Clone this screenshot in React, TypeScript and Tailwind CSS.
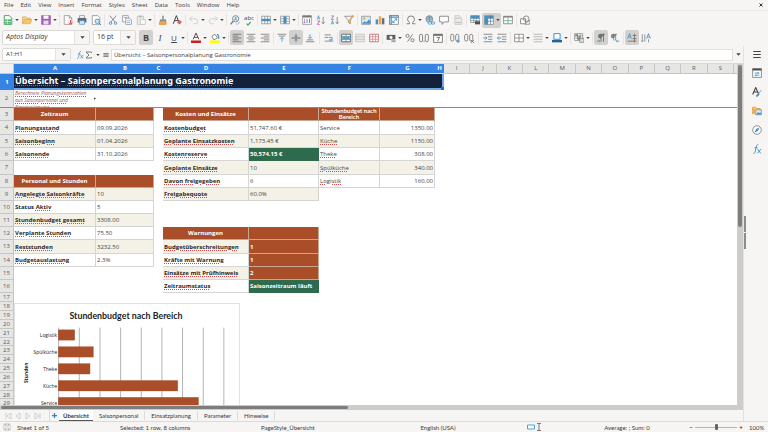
import React from "react";

/* ---------- icons ---------- */

type IconName = keyof typeof glyphs;

const G = "#777777";
const B = "#3f94cc";

const glyphs = {
  newSheet: (
    <>
      <path d="M2 1h8l4 4v10H2z" fill="#fff" stroke="#2f9e58" strokeWidth="1.4" />
      <path d="M3 7h10v7H3z" fill="#4bb772" />
      <path d="M3 10.500h10M7 7v7" stroke="#fff" />
    </>
  ),
  open: (
    <>
      <path d="M1 14V3h5l1.500 2H13v3" fill="#f7d9a0" stroke="#e0a03c" strokeWidth="1.200" />
      <path d="M1 14l3-7h12l-3 7z" fill="#f6c66e" stroke="#e0a03c" />
    </>
  ),
  save: (
    <>
      <path d="M1 1h14v14H1z" fill="#a463b8" stroke="#8e4aa3" />
      <path d="M4 1h8v5H4z" fill="#fff" />
      <path d="M4 9h8v6H4z" fill="#e9d7ee" />
    </>
  ),
  pdf: (
    <>
      <path d="M2 1h8l4 4v10H2z" fill="#fff" stroke={G} />
      <path d="M10 1v4h4" fill="none" stroke={G} />
      <path d="M12 8v6M9 12l3 3 3-3" fill="none" stroke="#d94a4a" strokeWidth="1.500" />
    </>
  ),
  print: (
    <>
      <path d="M4 1h8v4H4z" fill="#fff" stroke={G} />
      <path d="M1 5h14v7H1z" fill="#5d6570" />
      <path d="M4 9h8v6H4z" fill="#cfe6f5" stroke={B} />
    </>
  ),
  preview: (
    <>
      <path d="M2 1h9l3 3v11H2z" fill="#fff" stroke={G} />
      <circle cx="10" cy="10" r="3.500" fill="#cfe6f5" stroke={B} strokeWidth="1.400" />
      <path d="M12.500 12.500L16 16" stroke={B} strokeWidth="1.600" />
    </>
  ),
  cut: (
    <>
      <path d="M3 1l8 10M13 1L5 11" stroke={G} strokeWidth="1.300" fill="none" />
      <circle cx="4" cy="13" r="2" fill="none" stroke={B} strokeWidth="1.500" />
      <circle cx="12" cy="13" r="2" fill="none" stroke={B} strokeWidth="1.500" />
    </>
  ),
  copy: (
    <>
      <path d="M1 1h9v10H1z" fill="#fff" stroke={G} />
      <path d="M6 5h6l3 3v7H6z" fill="#fff" stroke={G} />
      <path d="M8 9h5M8 12h5M3 4h5" stroke={B} />
    </>
  ),
  paste: (
    <g opacity="0.5">
      <path d="M2 2h10v13H2z" fill="#e2e2e2" stroke={G} />
      <path d="M5 1h4v3H5z" fill={G} />
      <path d="M7 7h8v8H7z" fill="#fff" stroke={G} />
    </g>
  ),
  brush: (
    <>
      <path d="M7 1h2v6H7z" fill={G} />
      <path d="M3 7h10v3H3z" fill="#8a8a8a" />
      <path d="M3 10h10v5H2z" fill="#eda64f" stroke="#d08530" />
    </>
  ),
  clearFormat: (
    <>
      <path d="M2 14L7 1l5 13M4 9h6" fill="none" stroke="#444" strokeWidth="1.600" />
      <path d="M8 12l4-4 4 3-4 4z" fill="#e05c5c" />
    </>
  ),
  undo: <path d="M1 6h9a4 4 0 010 8H7M5 2L1 6l4 4" fill="none" stroke="#cfcfcd" strokeWidth="1.500" />,
  redo: <path d="M15 6H6a4 4 0 000 8h3M11 2l4 4-4 4" fill="none" stroke="#cfcfcd" strokeWidth="1.500" />,
  find: (
    <>
      <circle cx="9" cy="6" r="5" fill="#e4f1fa" stroke={G} strokeWidth="1.300" />
      <path d="M5 10l-4 5" stroke={G} strokeWidth="2" />
      <path d="M7 9l2-6 2 6M8 7h2" fill="none" stroke={B} />
      <path d="M10 14l2 1 4-4" fill="none" stroke={B} />
    </>
  ),
  rows: (
    <>
      <path d="M1 2h14v12H1z" fill="#fff" stroke={G} />
      <path d="M1 6h14v4H1z" fill={B} />
      <path d="M6 2v12M10.500 2v12" stroke={G} />
    </>
  ),
  cols: (
    <>
      <path d="M1 2h14v12H1z" fill="#fff" stroke={G} />
      <path d="M5.500 2h5v12h-5z" fill={B} />
      <path d="M1 6h14M1 10h14" stroke={G} />
    </>
  ),
  sort: (
    <>
      <path d="M1 1h14v14H1z" fill="#fff" stroke={G} />
      <path d="M1 1h14v3H1z" fill={G} />
      <path d="M4 6v7M2.500 11L4 13l1.500-2" fill="none" stroke="#b0559e" />
      <path d="M8 13V6M12 6v7" stroke={B} strokeWidth="1.500" />
    </>
  ),
  sortAsc: (
    <>
      <path d="M2 7l2-6 2 6M3 5h2" fill="none" stroke={B} strokeWidth="1.200" />
      <path d="M2 9.500h4L2 15h4" fill="none" stroke="#b0559e" strokeWidth="1.200" />
      <path d="M11.500 3v11M9 11l2.500 3 2.500-3" fill="none" stroke={G} strokeWidth="1.200" />
    </>
  ),
  sortDesc: (
    <>
      <path d="M2 1.500h4L2 7h4" fill="none" stroke="#b0559e" strokeWidth="1.200" />
      <path d="M2 15l2-6 2 6M3 13h2" fill="none" stroke={B} strokeWidth="1.200" />
      <path d="M11.500 3v11M9 11l2.500 3 2.500-3" fill="none" stroke={G} strokeWidth="1.200" />
    </>
  ),
  filter: (
    <>
      <path d="M1 2h14l-5 6v6l-3-2V8z" fill="#fff" stroke={G} strokeWidth="1.200" />
      <path d="M13 1h2l-5 7v5l-1-1V7z" fill="#eda64f" stroke="#eda64f" />
    </>
  ),
  image: (
    <>
      <path d="M1 2h14v13H1z" fill="#d8ecf8" stroke={G} />
      <circle cx="5" cy="5.500" r="2" fill="#eda64f" />
      <path d="M1.500 14l4-4 3 2 4-5 2.500 3v4z" fill={B} />
    </>
  ),
  chart: (
    <>
      <path d="M1 7h4v8H1z" fill={B} />
      <path d="M6 2h4v13H6z" fill="#eda64f" />
      <path d="M11 5h4v10h-4z" fill="#66707c" />
    </>
  ),
  pivot: (
    <>
      <path d="M1 1h14v14H1z" fill="#fff" stroke={G} strokeWidth="1.200" />
      <path d="M1 1h14v3H1zM1 1h3v14H1z" fill="#a5cde8" stroke={G} />
      <path d="M6 12l6-6M9 6h3v3M9 12H6V9" fill="none" stroke={B} strokeWidth="1.400" />
    </>
  ),
  omega: (
    <path
      d="M1 14h4.500v-2A6 6 0 012.500 7a5.500 5.500 0 0111 0 6 6 0 01-3 5v2H15"
      fill="none"
      stroke={G}
      strokeWidth="1.500"
    />
  ),
  link: (
    <>
      <circle cx="7" cy="6.500" r="5.500" fill="#a5cde8" stroke={G} />
      <path d="M1.500 6.500h11M7 1v11M3 3.500h8" stroke={G} fill="none" />
      <rect x="5" y="11" width="6" height="3.500" rx="1.700" fill="#fff" stroke={B} strokeWidth="1.300" />
      <rect x="10" y="11" width="5.500" height="3.500" rx="1.700" fill="none" stroke={B} strokeWidth="1.300" />
    </>
  ),
  comment: <path d="M1 2h14v9H8l-3 4v-4H1z" fill="#fff" stroke={G} strokeWidth="1.300" />,
  headerFooter: (
    <g opacity="0.45">
      <path d="M3 1h7l4 4v10H3z" fill="#ddd" stroke={G} />
      <path d="M4 5h8M4 12h9" stroke={G} strokeWidth="1.500" />
    </g>
  ),
  printArea: (
    <>
      <path d="M1 1h14v11H1z" fill="#fff" stroke={G} />
      <path d="M1 1h14v5H1z" fill={B} />
      <path d="M6 1v11M10 1v11M1 9h14" stroke={G} />
      <path d="M8 10h8v5H8z" fill="#4b525c" />
    </>
  ),
  freeze: (
    <>
      <path d="M1 1h14v14H1z" fill="#fff" stroke={G} />
      <path d="M1 1h14v4H1zM1 1h5v14H1z" fill={B} />
      <path d="M6 5v10M6 5h9M10.500 1v14M1 10h14" stroke="#4f6f88" />
    </>
  ),
  splitWin: (
    <>
      <path d="M1 2h14v12H1z" fill="#fff" stroke={G} strokeWidth="1.200" />
      <path d="M1 2h14v2H1z" fill={G} />
      <path d="M8 4v10M1 9h14" stroke="#5aa47c" strokeWidth="1.200" />
    </>
  ),
  shapes: (
    <>
      <path d="M1 6h8v8H1z" fill="#fff" stroke={G} strokeWidth="1.300" />
      <circle cx="10" cy="6" r="4.500" fill="none" stroke={G} strokeWidth="1.300" />
      <path d="M8 15l7-7v7z" fill="none" stroke={G} />
    </>
  ),
  fontColor: (
    <>
      <path d="M3.500 10L8 0l4.500 10M5 7h6" fill="none" stroke="#555" strokeWidth="1.600" />
      <path d="M0 12h16v4H0z" fill="#c9211e" />
    </>
  ),
  highlight: (
    <>
      <path d="M3 5l5-3 4 6-6 3z" fill="#fff" stroke={G} strokeWidth="1.300" />
      <path d="M11 2c3 0 3 3 3 7" fill="none" stroke={B} strokeWidth="2" />
      <path d="M0 12h16v4H0z" fill="#ffff00" />
    </>
  ),
  alignL: <path d="M1 2h14M1 5h9M1 8h14M1 11h9M1 14h14" stroke="#666" strokeWidth="1.300" />,
  alignC: <path d="M1 2h14M4 5h8M1 8h14M4 11h8M1 14h14" stroke={G} strokeWidth="1.300" />,
  alignR: <path d="M1 2h14M6 5h9M1 8h14M6 11h9M1 14h14" stroke={G} strokeWidth="1.300" />,
  vTop: (
    <>
      <path d="M1 2h14M3 5h10" stroke={G} strokeWidth="1.300" />
      <path d="M8 14V7M5 10l3-3 3 3" fill="none" stroke={B} strokeWidth="1.300" />
    </>
  ),
  vMid: (
    <>
      <path d="M1 8h14" stroke="#666" strokeWidth="1.600" />
      <path
        d="M8 1v5M5.500 4L8 6.500 10.500 4M8 15v-5M5.500 12L8 9.500l2.500 2.500"
        fill="none"
        stroke="#4a7fa6"
        strokeWidth="1.300"
      />
    </>
  ),
  vBot: (
    <>
      <path d="M1 14h14M3 11h10" stroke={G} strokeWidth="1.300" />
      <path d="M8 2v7M5 6l3 3 3-3" fill="none" stroke={B} strokeWidth="1.300" />
    </>
  ),
  wrap: (
    <>
      <path d="M1 3h10M1 7h6M1 13h14" stroke={G} strokeWidth="1.300" />
      <path d="M8 7h5v4h-4M11 9l-2 2 2 2" fill="none" stroke={B} strokeWidth="1.300" />
    </>
  ),
  merge: (
    <>
      <path d="M1 2h14v12H1z" fill="#fff" stroke="#555" strokeWidth="1.300" />
      <path d="M1 5.500h14v5H1z" fill="#7dbce3" stroke="#4a7fa6" />
      <path d="M8 2v3M8 11v3M4 8h8M6 6L4 8l2 2M10 6l2 2-2 2" fill="none" stroke="#3b6a8f" />
    </>
  ),
  mergeOff: (
    <g opacity="0.5">
      <path d="M1 2h14v12H1z" fill="#ddd" stroke={G} />
      <path d="M1 6h14M1 10h14" stroke={G} />
    </g>
  ),
  unmerge: (
    <>
      <path d="M1 2h14v12H1z" fill="#fff" stroke="#b55" strokeWidth="1.200" />
      <path d="M1 6h14M1 10h14M6 2v12M10.500 2v12" stroke="#d06a6a" />
    </>
  ),
  currency: (
    <>
      <path d="M1 3h14v8H1z" fill="#5c6066" />
      <circle cx="8" cy="7" r="2.500" fill="#f4f4f4" />
      <path d="M8 11h8v4H8z" fill="#9a9a9a" stroke="#fff" />
    </>
  ),
  percent: (
    <>
      <circle cx="4" cy="4.500" r="2.500" fill="none" stroke={G} strokeWidth="1.400" />
      <circle cx="12" cy="11.500" r="2.500" fill="none" stroke={G} strokeWidth="1.400" />
      <path d="M12 2L4 14" stroke={G} strokeWidth="1.400" />
    </>
  ),
  number: (
    <>
      <rect x="0.700" y="2" width="5" height="12" rx="2.500" fill="none" stroke={G} strokeWidth="1.400" />
      <rect x="10" y="2" width="5" height="12" rx="2.500" fill="none" stroke={G} strokeWidth="1.400" />
      <path d="M7 13h2" stroke={G} strokeWidth="1.500" />
    </>
  ),
  date: (
    <>
      <path d="M1 2h14v13H1z" fill="#fff" stroke="#666" strokeWidth="1.300" />
      <path d="M1 2h14v2.500H1z" fill="#666" />
      <path d="M5.500 7h5l-3 6" fill="none" stroke="#555" strokeWidth="1.300" />
    </>
  ),
  decAdd: (
    <>
      <rect x="1" y="2" width="5" height="11" rx="2.500" fill="none" stroke={G} strokeWidth="1.300" />
      <rect x="9" y="2" width="5" height="11" rx="2.500" fill="none" stroke={G} strokeWidth="1.300" />
      <path d="M13 10v6M10 13h6" stroke={B} strokeWidth="1.600" />
    </>
  ),
  decDel: (
    <>
      <rect x="1" y="2" width="5" height="11" rx="2.500" fill="none" stroke={G} strokeWidth="1.300" />
      <rect x="9" y="2" width="5" height="11" rx="2.500" fill="none" stroke={G} strokeWidth="1.300" />
      <path d="M11 11l5 5M16 11l-5 5" stroke="#d94a4a" strokeWidth="1.400" />
    </>
  ),
  indent: (
    <>
      <path d="M1 2h14M8 6h7M8 10h7M1 14h14" stroke={G} strokeWidth="1.300" />
      <path d="M0 8h6M4 5.500L6.500 8 4 10.500" fill="none" stroke={B} strokeWidth="1.400" />
    </>
  ),
  outdent: (
    <>
      <path d="M1 2h14M8 6h7M8 10h7M1 14h14" stroke={G} strokeWidth="1.300" />
      <path d="M1 8h6M3 5.500L0.500 8 3 10.500" fill="none" stroke={B} strokeWidth="1.400" />
    </>
  ),
  borders: <path d="M1 2h14v12H1zM8 2v12M1 8h14" fill="#fff" stroke={G} strokeWidth="1.200" />,
  borderStyle: <path d="M1 2h14M1 6h14M1 10h14M1 14h14" stroke="#b5b5b5" strokeWidth="1.500" />,
  borderColor: (
    <>
      <path d="M3 1h10v9H3z" fill="#fff" stroke={B} strokeWidth="1.600" />
      <path d="M0 11h16v4H0z" fill="#2a6099" />
    </>
  ),
  conditional: (
    <>
      <path d="M1 1h13v11H1z" fill="#fff" stroke={G} />
      <path d="M2 2h4v3H2zM6 8h4v3H6z" fill="#5fae7b" />
      <path d="M6 5h4v3H6z" fill="#e07a6a" />
      <path d="M1 4.500h13M1 8h13M5.500 1v11M10 1v11" stroke={G} />
      <path d="M9 9h7v6H9z" fill="#ddd" stroke={G} />
    </>
  ),
  ltr: (
    <>
      <path d="M8 14V2M12 14V2M14 2H7a3 3 0 000 6h1" fill="#777" stroke="#666" strokeWidth="1.300" />
      <path d="M1 13h5M4 11l2 2-2 2" fill="none" stroke={B} strokeWidth="1.200" />
    </>
  ),
  rtl: (
    <>
      <path d="M6 12V2M9 12V2M11 2H5a3 3 0 000 6h1" fill="#888" stroke={G} strokeWidth="1.200" />
      <path d="M15 13h-5M12 11l-2 2 2 2" fill="none" stroke={B} strokeWidth="1.200" />
    </>
  ),
  textH: (
    <>
      <path d="M1 9l3-8 3 8M2.500 6.500h3" fill="none" stroke={B} strokeWidth="1.400" />
      <path d="M9 4h6M9 9h6M1 13h14M12 1v14" stroke="#666" strokeWidth="1.200" />
    </>
  ),
  textV: (
    <>
      <path d="M2 2v12M6 2v12M0.500 12L2 14l1.500-2M12 10v5" fill="none" stroke={G} strokeWidth="1.200" />
      <path d="M9 9l3-8 3 8M10.500 6.500h3" fill="none" stroke={B} strokeWidth="1.400" />
    </>
  ),
  properties: (
    <>
      <path d="M1 1h14v14H1z" fill="#fff" stroke={G} strokeWidth="1.300" />
      <path d="M1 1h14v3H1z" fill="#4a4a4a" />
      <path d="M4 8h8M4 11.500h8M9.500 6.500v3M6.500 10v3" stroke={B} strokeWidth="1.300" />
    </>
  ),
  styles: (
    <>
      <path d="M1 12L6 1l5 11M3 8h6" fill="none" stroke="#444" strokeWidth="1.800" />
      <path d="M15 5l-5 6M7 15c0-3 2-4 4-4 0 3-2 4-4 4z" fill={B} stroke={B} strokeWidth="1.300" />
    </>
  ),
  gallery: (
    <>
      <path d="M1 13V2h5l1 2h6v3" fill="#f7d9a0" stroke="#e0a03c" strokeWidth="1.500" />
      <path d="M1 4h4v9H1z" fill="#f0b04e" />
      <path d="M6 6h9v8H6z" fill="#d8ecf8" stroke={G} />
      <path d="M6.500 13.500l3-4 2 2 1.500-2 2 4z" fill={B} />
    </>
  ),
  navigator: (
    <>
      <circle cx="8" cy="8" r="6.800" fill="#fff" stroke={G} strokeWidth="1.300" />
      <path d="M12 4L9.500 9.500 4 12l2.500-5.500z" fill={B} />
    </>
  ),
  functions: (
    <>
      <path d="M2 15c3 0 3-2 4-7s1-7 4-7M4 6h5" fill="none" stroke={B} strokeWidth="1.500" />
      <path d="M9 8l5 7M14.500 8L8.500 15" fill="none" stroke={B} strokeWidth="1.500" />
    </>
  ),
  sigma: <path d="M13 4V2H2l6 6-6 6h11v-2" fill="none" stroke="#555" strokeWidth="1.500" />,
  equals: <path d="M1 5h14M1 11h14" stroke="#444" strokeWidth="2.600" />,
  menu: <path d="M2 4h12M2 8.800h12M2 13.600h12" stroke="#444" strokeWidth="1.800" />,
  saved: <path d="M2 2h12v12H2zM5 2v4h6V2M5 14v-4h6v4" fill="#fff" stroke="#a5a5a5" strokeWidth="1.300" />,
  caret: <path d="M1 4h14l-7 8z" fill="#444" />,
  check: <path d="M2 8l4 5 9-10" fill="none" stroke="#35a864" strokeWidth="3.500" />,
};

function Icon({ name, className = "size-[10px]" }: { name: IconName; className?: string }) {
  return (
    <svg viewBox="0 0 16 16" className={className} aria-hidden="true">
      {glyphs[name]}
    </svg>
  );
}

/* ---------- toolbars ---------- */

type Tool = {
  icon?: IconName;
  text?: React.ReactNode;
  label: string;
  menu?: boolean;
  active?: boolean;
};
type Entry = Tool | "|" | "||";

const standardTools: Entry[] = [
  { icon: "newSheet", label: "New", menu: true },
  { icon: "open", label: "Open", menu: true },
  { icon: "save", label: "Save", menu: true },
  "|",
  { icon: "pdf", label: "Export as PDF" },
  { icon: "print", label: "Print" },
  { icon: "preview", label: "Print preview" },
  "|",
  { icon: "cut", label: "Cut" },
  { icon: "copy", label: "Copy" },
  { icon: "paste", label: "Paste", menu: true },
  "|",
  { icon: "brush", label: "Clone formatting" },
  { icon: "clearFormat", label: "Clear formatting" },
  "|",
  { icon: "undo", label: "Undo", menu: true },
  { icon: "redo", label: "Redo", menu: true },
  "|",
  { icon: "find", label: "Find and replace" },
  {
    text: (
      <span className="flex flex-col items-center text-[6px] leading-[6px]">
        abc
        <Icon name="check" className="size-[5px]" />
      </span>
    ),
    label: "Spelling",
  },
  "|",
  { icon: "rows", label: "Row", menu: true },
  { icon: "cols", label: "Column", menu: true },
  "|",
  { icon: "sort", label: "Sort" },
  { icon: "sortAsc", label: "Sort ascending" },
  { icon: "sortDesc", label: "Sort descending" },
  { icon: "filter", label: "AutoFilter" },
  "|",
  { icon: "image", label: "Insert image" },
  { icon: "chart", label: "Insert chart" },
  { icon: "pivot", label: "Insert pivot table" },
  "|",
  { icon: "omega", label: "Special character", menu: true },
  { icon: "link", label: "Hyperlink" },
  { icon: "comment", label: "Comment" },
  { icon: "headerFooter", label: "Headers and footers" },
  "|",
  { icon: "printArea", label: "Print area" },
  { icon: "freeze", label: "Freeze rows and columns", menu: true, active: true },
  { icon: "splitWin", label: "Split window" },
  "|",
  { icon: "shapes", label: "Draw functions" },
];

const formatTools: Entry[] = [
  { text: <b className="text-[9px] leading-[10px]">B</b>, label: "Bold", active: true },
  { text: <i className="font-['Liberation_Serif',serif] text-[9px] leading-[10px]">I</i>, label: "Italic" },
  { text: <span className="text-[8px] leading-[10px] underline">U</span>, label: "Underline", menu: true },
  "|",
  { icon: "fontColor", label: "Font color", menu: true },
  { icon: "highlight", label: "Background color", menu: true },
  "|",
  { icon: "alignL", label: "Align left", active: true },
  { icon: "alignC", label: "Align center" },
  { icon: "alignR", label: "Align right" },
  "|",
  { icon: "vTop", label: "Align top" },
  { icon: "vMid", label: "Center vertically", active: true },
  { icon: "vBot", label: "Align bottom" },
  "||",
  { icon: "wrap", label: "Wrap text" },
  "|",
  { icon: "merge", label: "Merge and center", active: true },
  { icon: "mergeOff", label: "Merge cells" },
  { icon: "unmerge", label: "Unmerge cells" },
  "|",
  { icon: "currency", label: "Currency", menu: true },
  { icon: "percent", label: "Percent" },
  { icon: "number", label: "Number" },
  { icon: "date", label: "Date" },
  "|",
  { icon: "decAdd", label: "Add decimal place" },
  { icon: "decDel", label: "Delete decimal place" },
  "||",
  { icon: "indent", label: "Increase indent" },
  { icon: "outdent", label: "Decrease indent" },
  "|",
  { icon: "borders", label: "Borders", menu: true },
  { icon: "borderStyle", label: "Border style", menu: true },
  { icon: "borderColor", label: "Border color", menu: true },
  "|",
  { icon: "conditional", label: "Conditional formatting", menu: true },
  "|",
  { icon: "ltr", label: "Left to right", active: true },
  { icon: "rtl", label: "Right to left" },
  "|",
  { icon: "textH", label: "Text direction horizontal", active: true },
  { icon: "textV", label: "Text direction vertical" },
];

function Tools({ entries }: { entries: Entry[] }) {
  return (
    <>
      {entries.map((e, i) =>
        typeof e === "string" ? (
          <span key={i} className={`flex h-[12px] shrink-0 justify-center ${e === "|" ? "w-[3px]" : "w-[5px]"}`}>
            <span className="w-px bg-[#e6e5e3]" />
          </span>
        ) : (
          <button
            key={i}
            type="button"
            aria-label={e.label}
            className={`flex h-[15px] shrink-0 items-center rounded-[2px] ${e.menu ? "w-[19px]" : "w-[14px]"} ${
              e.active ? "bg-[#d3d1ce]" : ""
            }`}
          >
            <span className="flex w-[14px] items-center justify-center text-[#444]">
              {e.icon ? <Icon name={e.icon} /> : e.text}
            </span>
            {e.menu && <Icon name="caret" className="size-[4px]" />}
          </button>
        )
      )}
    </>
  );
}

function Combo({
  label,
  value,
  box,
  text = "",
}: {
  label: string;
  value: string;
  box: string;
  text?: string;
}) {
  return (
    <div className={`flex shrink-0 overflow-hidden rounded-[2px] border border-[#dcdad7] bg-white ${box}`}>
      <input aria-label={label} defaultValue={value} className={`min-w-0 flex-1 pl-[3px] outline-none ${text}`} />
      <button
        type="button"
        aria-label={`${label} list`}
        className="flex w-[15px] items-center justify-center border-l border-[#e4e2df] bg-[#f6f5f4]"
      >
        <Icon name="caret" className="size-[5px]" />
      </button>
    </div>
  );
}

/* ---------- sheet ---------- */

type Cell = { v?: React.ReactNode; k: string; span?: number };

const kinds: Record<string, string> = {
  head: "bg-[#a94e28] text-white font-bold text-center border-[#c9a893]",
  key: "bg-white font-bold text-[#2a2a2a] border-[#d5d5d5]",
  keyAlt: "bg-[#f4f1e6] font-bold text-[#2a2a2a] border-[#d5d5d5]",
  val: "bg-white text-[#444] border-[#d5d5d5]",
  valAlt: "bg-[#f4f1e6] text-[#444] border-[#d5d5d5]",
  num: "bg-white text-[#444] text-right border-[#d5d5d5]",
  numAlt: "bg-[#f4f1e6] text-[#444] text-right border-[#d5d5d5]",
  bad: "bg-[#a94e28] text-white font-bold border-[#c9a893]",
  good: "bg-[#2e6b4e] text-white font-bold border-[#2e6b4e]",
  none: "border-transparent",
};

const heights: Record<number, string> = {
  8: "h-[8px] leading-[8px]",
  9: "h-[9px] leading-[9px]",
  13: "h-[13px] leading-[12px]",
  14: "h-[14px] leading-[13px]",
};

/* marks a word the spell checker does not know */
const S = ({ children }: { children: React.ReactNode }) => (
  <span className="underline decoration-[#d8484a] decoration-dotted decoration-1 underline-offset-1">{children}</span>
);

const gap = (span = 1): Cell => ({ k: "none", span });
const pair = (a: React.ReactNode, b: string, alt: boolean, kind?: string): Cell[] => [
  { v: a, k: alt ? "keyAlt" : "key" },
  { v: b, k: kind ?? (alt ? "valAlt" : "val") },
];
const area = (a: React.ReactNode, b: string, alt: boolean): Cell[] => [
  { v: a, k: alt ? "valAlt" : "val" },
  { v: b, k: alt ? "numAlt" : "num" },
];
const heading = (v: string): Cell[] => [
  { v, k: "head" },
  { v: "", k: "head" },
];

const rows: { n: number; h: number; cells: Cell[] }[] = [
  {
    n: 3,
    h: 13,
    cells: [
      ...heading("Zeitraum"),
      gap(),
      ...heading("Kosten und Einsätze"),
      {
        v: (
          <span className="block text-center font-['Lato',sans-serif] leading-[6px]">
            Stundenbudget nach
            <br />
            Bereich
          </span>
        ),
        k: "head",
      },
      { v: "", k: "head" },
    ],
  },
  {
    n: 4,
    h: 14,
    cells: [
      ...pair(<S>Planungsstand</S>, "09.09.2026", false),
      gap(),
      ...pair(<S>Kostenbudget</S>, "51,747.60 €", false),
      ...area("Service", "1350.00", false),
    ],
  },
  {
    n: 5,
    h: 13,
    cells: [
      ...pair(<S>Saisonbeginn</S>, "01.04.2026", true),
      gap(),
      ...pair(<S>Geplante Einsatzkosten</S>, "1,173.45 €", true),
      ...area(<S>Küche</S>, "1150.00", true),
    ],
  },
  {
    n: 6,
    h: 13,
    cells: [
      ...pair(<S>Saisonende</S>, "31.10.2026", false),
      gap(),
      ...pair(<S>Kostenreserve</S>, "50,574.15 €", false, "good"),
      ...area(<S>Theke</S>, "308.00", false),
    ],
  },
  {
    n: 7,
    h: 14,
    cells: [gap(3), ...pair(<S>Geplante Einsätze</S>, "10", true), ...area(<S>Spülküche</S>, "340.00", true)],
  },
  {
    n: 8,
    h: 13,
    cells: [
      ...heading("Personal und Stunden"),
      gap(),
      ...pair(<S>Davon freigegeben</S>, "6", false),
      ...area(<S>Logistik</S>, "160.00", false),
    ],
  },
  {
    n: 9,
    h: 13,
    cells: [...pair(<S>Angelegte Saisonkräfte</S>, "10", true), gap(), ...pair(<S>Freigabequote</S>, "60.0%", true)],
  },
  {
    n: 10,
    h: 13,
    cells: pair(
      <>
        Status <S>Aktiv</S>
      </>,
      "5",
      false
    ),
  },
  { n: 11, h: 13, cells: pair(<S>Stundenbudget gesamt</S>, "3308.00", true) },
  { n: 12, h: 13, cells: [...pair(<S>Verplante Stunden</S>, "75.50", false), gap(), ...heading("Warnungen")] },
  {
    n: 13,
    h: 14,
    cells: [...pair(<S>Reststunden</S>, "3232.50", true), gap(), ...pair(<S>Budgetüberschreitungen</S>, "1", true, "bad")],
  },
  {
    n: 14,
    h: 13,
    cells: [...pair(<S>Budgetauslastung</S>, "2.3%", false), gap(), ...pair(<S>Kräfte mit Warnung</S>, "1", false, "bad")],
  },
  { n: 15, h: 13, cells: [gap(3), ...pair(<S>Einsätze mit Prüfhinweis</S>, "2", true, "bad")] },
  { n: 16, h: 13, cells: [gap(3), ...pair(<S>Zeitraumstatus</S>, "Saisonzeitraum läuft", false, "good")] },
  ...[9, 9, 9, 9, 9, 8, 9, 9, 9, 9, 9, 8, 9].map((h, i) => ({ n: 17 + i, h, cells: [] as Cell[] })),
];

const rowHead =
  "border-r border-b border-[#c6c6c5] bg-[#e6e6e5] p-0 text-center align-middle text-[6px] font-normal text-[#5a5a5a]";

const selectedCols = ["A", "B", "C", "D", "E", "F", "G", "H"];
const otherCols = ["I", "J", "K", "L", "M", "N", "O", "P", "Q", "R", "S"];

function Sheet() {
  return (
    <table className="w-full table-fixed border-separate border-spacing-0 text-[6px]">
      <colgroup>
        <col className="w-[14px]" />
        <col className="w-[82px]" />
        <col className="w-[58px]" />
        <col className="w-[9px]" />
        <col className="w-[86px]" />
        <col className="w-[70px]" />
        <col className="w-[61px]" />
        <col className="w-[55px]" />
        <col className="w-[9px]" />
        {otherCols.map((c) => (
          <col key={c} />
        ))}
        <col className="w-[3px]" />
      </colgroup>
      <thead>
        <tr className="h-[10px] text-[6px] leading-[9px]">
          <th className="border-r border-b border-[#c6c6c5] bg-[#f1f1f0] p-0" />
          {selectedCols.map((c) => (
            <th key={c} scope="col" className="border-b border-[#c9dcf5] bg-[#3584e4] p-0 font-bold text-white">
              {c}
            </th>
          ))}
          {otherCols.map((c) => (
            <th
              key={c}
              scope="col"
              className="border-r border-b border-[#c6c6c5] bg-[#e6e6e5] p-0 font-normal text-[#5a5a5a]"
            >
              {c}
            </th>
          ))}
          <th className="border-b border-[#c6c6c5] bg-[#e6e6e5] p-0" />
        </tr>
      </thead>
      <tbody>
        <tr className="h-[16px]">
          <th scope="row" className="bg-[#3584e4] p-0 text-[6px] font-bold text-white">
            1
          </th>
          <td
            colSpan={8}
            className="relative border-2 border-t-0 border-l-0 border-[#77a7e3] bg-[#14213a] p-0 align-middle font-bold text-white"
          >
            <div className="h-[14px] overflow-hidden pl-px font-['Noto_Sans',sans-serif] text-[9px] leading-[14px] whitespace-nowrap">
              <S>Übersicht</S> – <S>Saisonpersonalplanung</S> <S>Gastronomie</S>
            </div>
            <span className="absolute -right-[2px] -bottom-[2px] size-[3px] bg-[#1f6fd6]" />
          </td>
          <td colSpan={12} className="p-0" />
        </tr>
        <tr className="h-[18px]">
          <th scope="row" className={rowHead + " h-[18px] border-b-[#8a8a8a]"}>
            2
          </th>
          <td className="h-[18px] border-b border-[#8a8a8a] p-0 align-top">
            <div className="h-[17px] overflow-hidden pl-px text-[5px] leading-[7px] whitespace-nowrap text-[#9a5a5a] italic">
              <S>Berechnete Planungskennzahlen</S>
              <br />
              <S>aus Saisonpersonal und</S>
              <br />
              <S>Einsatzplanung</S>
            </div>
          </td>
          <td colSpan={19} className="border-b border-[#8a8a8a] p-0 align-middle">
            <svg viewBox="0 0 3 4" className="-ml-[2px] h-[3px] w-[2px]" aria-hidden="true">
              <path d="M0 0l3 2-3 2z" fill="#444" />
            </svg>
          </td>
        </tr>
        {rows.map((r) => (
          <tr key={r.n} className={heights[r.h]}>
            <th scope="row" className={rowHead}>
              <div className={heights[r.h] + " -my-px overflow-hidden"}>{r.n}</div>
            </th>
            {r.cells.map((c, i) => (
              <td key={i} colSpan={c.span ?? 1} className={`border-r border-b p-0 align-middle ${kinds[c.k]}`}>
                <div className="h-[12px] overflow-hidden px-px whitespace-nowrap">{c.v}</div>
              </td>
            ))}
          </tr>
        ))}
      </tbody>
    </table>
  );
}

const bars = [
  { name: "Logistik", v: 160 / 1200 },
  { name: "Spülküche", v: 340 / 1200 },
  { name: "Theke", v: 308 / 1200 },
  { name: "Küche", v: 1150 / 1200 },
  { name: "Service", v: 1350 / 1200 },
];

function Chart() {
  return (
    <svg
      viewBox="0 0 226 120"
      className="block h-[120px] w-[226px] border border-[#e2e2e2] bg-white"
      role="img"
      aria-label="Stundenbudget nach Bereich"
    >
      <text
        x="112"
        y="15"
        textAnchor="middle"
        fontSize="9"
        fontWeight="700"
        fill="#222"
        className="font-['Lato',sans-serif]"
      >
        Stundenbudget nach Bereich
      </text>
      {[0, 1, 2, 3, 4, 5, 6, 7, 8].map((i) => (
        <path key={i} d={`M${43.5 + i * 21} 24V120`} stroke="#b3b3b3" />
      ))}
      {bars.map((b, i) => (
        <g key={b.name}>
          <rect x="43" y={26 + i * 17.2} width={b.v * 127} height="11" fill="#a94e28" />
          <text x="42" y={33.5 + i * 17.2} textAnchor="end" fontSize="5" fill="#222">
            {b.name}
          </text>
        </g>
      ))}
      <text x="12" y="70" textAnchor="middle" fontSize="5" fontWeight="700" fill="#222" transform="rotate(-90 12 70)">
        Stunden
      </text>
    </svg>
  );
}

/* ---------- window ---------- */

const menus = ["File", "Edit", "View", "Insert", "Format", "Styles", "Sheet", "Data", "Tools", "Window", "Help"];
const tabs = ["Übersicht", "Saisonpersonal", "Einsatzplanung", "Parameter", "Hinweise"];
const panels: { icon: IconName; label: string }[] = [
  { icon: "properties", label: "Properties" },
  { icon: "styles", label: "Styles" },
  { icon: "gallery", label: "Gallery" },
  { icon: "navigator", label: "Navigator" },
  { icon: "functions", label: "Functions" },
];

export default function App() {
  return (
    <div className="flex h-screen w-full flex-col overflow-hidden bg-[#f6f5f4] font-['Open_Sans',sans-serif] text-[6px] text-[#3a3a3a]">
      <nav className="flex h-[11px] shrink-0 items-center border-b border-[#eae9e7] pr-[3px] pl-[4px]">
        <div className="flex flex-1 gap-[7px]">
          {menus.map((m) => (
            <button key={m} type="button" className="leading-[10px]">
              {m}
            </button>
          ))}
        </div>
        <button type="button" aria-label="Close document" className="flex w-[8px] justify-center">
          <svg viewBox="0 0 8 8" className="size-[4px]" aria-hidden="true">
            <path d="M1 1l6 6M7 1L1 7" stroke="#333" strokeWidth="2" />
          </svg>
        </button>
      </nav>

      <div className="flex h-[18px] shrink-0 items-center pl-px">
        <Tools entries={standardTools} />
      </div>

      <div className="flex h-[17px] shrink-0 items-center pl-[2px]">
        <Combo label="Font name" value="Aptos Display" box="mr-[3px] h-[15px] w-[88px]" text="italic text-[7px]" />
        <Combo label="Font size" value="16 pt" box="mr-[3px] h-[15px] w-[43px]" text="text-[7px]" />
        <Tools entries={formatTools} />
      </div>

      <div className="flex min-h-0 flex-1">
        <div className="flex min-w-0 flex-1 flex-col">
          <div className="flex h-[17px] shrink-0 items-center pl-[2px]">
            <Combo label="Name box" value="A1:H1" box="h-[13px] w-[69px]" />
            <button type="button" aria-label="Function wizard" className="ml-[3px] flex w-[11px] justify-center">
              <Icon name="functions" className="size-[8px]" />
            </button>
            <button type="button" aria-label="Select function" className="flex w-[15px] items-center gap-[3px]">
              <Icon name="sigma" className="size-[8px]" />
              <Icon name="caret" className="size-[4px]" />
            </button>
            <button type="button" aria-label="Formula" className="flex w-[11px] justify-center">
              <Icon name="equals" className="size-[6px]" />
            </button>
            <input
              aria-label="Formula input"
              defaultValue="Übersicht – Saisonpersonalplanung Gastronomie"
              className="h-[12px] min-w-0 flex-1 border border-[#e2e0dd] bg-white pl-[2px] outline-none"
            />
            <button type="button" aria-label="Expand formula bar" className="flex w-[10px] justify-center">
              <Icon name="caret" className="size-[5px]" />
            </button>
          </div>

          <div className="flex min-h-0 flex-1 border-t border-[#c9dcf5]">
            <div className="relative min-w-0 flex-1 overflow-hidden bg-white">
              <Sheet />
              <div className="absolute top-[239px] left-[14px]">
                <Chart />
              </div>
            </div>
            <div className="w-[6px] shrink-0 bg-[#cccccb] px-px pt-px">
              <div className="h-[162px] rounded-[2px] bg-[#7d7d7d]" />
            </div>
          </div>

          <div className="flex h-[5px] shrink-0 bg-[#cccccb] py-px pr-[6px] pl-px">
            <div className="w-[347px] rounded-[2px] bg-[#7d7d7d]" />
          </div>

          <div className="flex h-[11px] shrink-0 items-center font-['Lato',sans-serif]">
            <div className="flex w-[49px] shrink-0 items-center gap-[2px] pl-[4px]">
              {["First sheet", "Previous sheet", "Next sheet", "Last sheet"].map((label, i) => (
                <button key={label} type="button" aria-label={label} disabled>
                  <svg viewBox="0 0 8 8" className="size-[8px]" aria-hidden="true">
                    <path
                      d={["M2 1v6M7 1L3 4l4 3z", "M6 1L2 4l4 3z", "M2 1l4 3-4 3z", "M6 1v6M1 1l4 3-4 3z"][i]}
                      fill="none"
                      stroke="#d0cfcd"
                    />
                  </svg>
                </button>
              ))}
            </div>
            <button
              type="button"
              aria-label="Add sheet"
              className="flex h-full w-[10px] shrink-0 items-center justify-center border-l border-[#dddcda]"
            >
              <svg viewBox="0 0 8 8" className="size-[5px]" aria-hidden="true">
                <path d="M4 0v8M0 4h8" stroke="#2f7fc4" strokeWidth="2" />
              </svg>
            </button>
            {tabs.map((t, i) => (
              <button
                key={t}
                type="button"
                className={
                  i === 0
                    ? "h-full border-b border-[#555] bg-white px-[4px] leading-[9px] font-bold"
                    : "h-[9px] border-r border-[#dddcda] px-[6px] leading-[9px]"
                }
              >
                {t}
              </button>
            ))}
          </div>
        </div>

        <div className="flex w-[3px] shrink-0 flex-col gap-px border-l border-[#e2e1df] pt-[170px]">
          <span className="h-[16px] bg-[#8b8b8b]" />
          <span className="h-[16px] bg-[#8b8b8b]" />
        </div>
        <aside className="flex w-[22px] shrink-0 flex-col items-center pt-[3px]">
          <button type="button" aria-label="Sidebar settings" className="mb-[9px]">
            <Icon name="menu" className="block size-[10px]" />
          </button>
          <div className="flex flex-col gap-[9px]">
            {panels.map((p) => (
              <button key={p.icon} type="button" aria-label={p.label}>
                <Icon name={p.icon} className="block size-[10px]" />
              </button>
            ))}
          </div>
        </aside>
      </div>

      <footer className="flex h-[11px] shrink-0 items-center border-t border-[#dcdbd9] pr-px pl-[3px] font-['Lato',sans-serif]">
        <Icon name="saved" className="size-[8px] shrink-0" />
        <span className="w-[109px] shrink-0 pl-[6px]">Sheet 1 of 5</span>
        <span className="w-[141px] shrink-0">Selected: 1 row, 8 columns</span>
        <span className="w-[115px] shrink-0">PageStyle_Übersicht</span>
        <span className="flex-1 text-center">English (USA)</span>
        <span className="flex w-[66px] shrink-0 items-center justify-center gap-px">
          <svg viewBox="0 0 10 8" className="h-[8px] w-[10px]" aria-hidden="true">
            <path d="M1.500 2h7v4h-7z" fill="#fff" stroke="#4aa3d6" />
          </svg>
          <svg viewBox="0 0 4 8" className="h-[8px] w-[4px]" aria-hidden="true">
            <path d="M0 0.500h4M2 0v8M0 7.500h4" fill="none" stroke="#777" />
          </svg>
        </span>
        <span className="w-[122px] shrink-0 text-center">Average: ; Sum: 0</span>
        <button type="button" aria-label="Zoom out" className="w-[6px] text-center leading-[8px] font-bold">
          −
        </button>
        <input
          type="range"
          aria-label="Zoom"
          defaultValue={50}
          className="mx-px h-[6px] w-[42px] appearance-none bg-[linear-gradient(#b5b5b5,#b5b5b5)] bg-[length:100%_1px] bg-center bg-no-repeat [&::-webkit-slider-thumb]:h-[6px] [&::-webkit-slider-thumb]:w-[3px] [&::-webkit-slider-thumb]:appearance-none [&::-webkit-slider-thumb]:rounded-[1px] [&::-webkit-slider-thumb]:bg-[#666]"
        />
        <button type="button" aria-label="Zoom in" className="w-[6px] text-center leading-[8px] font-bold">
          +
        </button>
        <span className="ml-[5px] w-[18px] shrink-0">100%</span>
      </footer>
    </div>
  );
}
